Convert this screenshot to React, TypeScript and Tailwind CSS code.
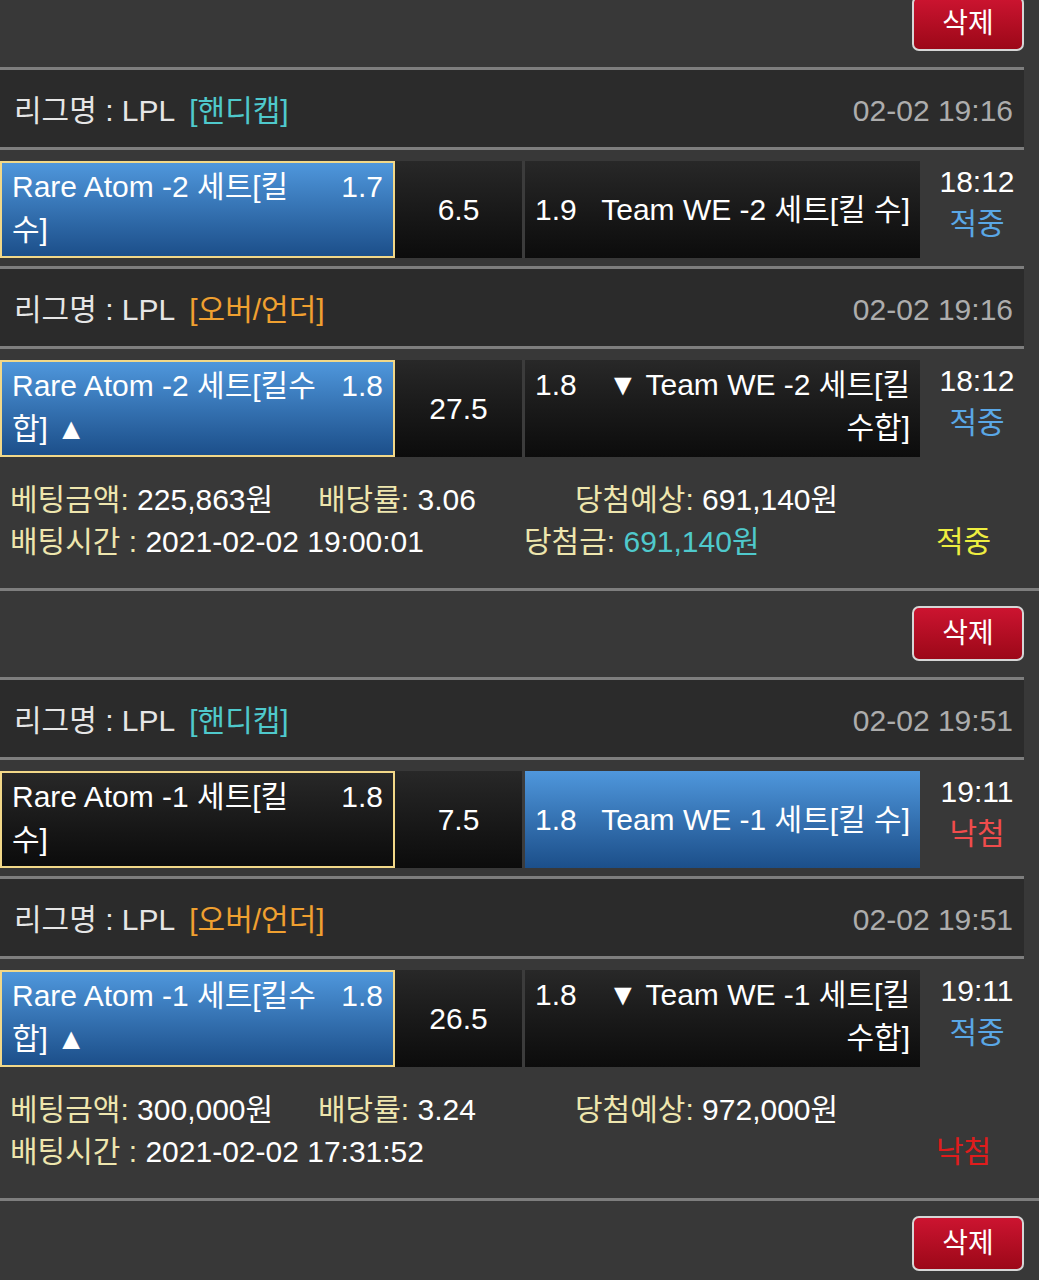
import React from "react";

type Side = { lines: string[]; odds: string; selected: boolean };
type Match = {
  type: "핸디캡" | "오버/언더";
  date: string;
  left: Side;
  mid: string;
  right: Side;
  time: string;
  result: "적중" | "낙첨";
};
type Group = {
  matches: Match[];
  amount: string;
  rate: string;
  expect: string;
  betTime: string;
  won?: string;
  status: "적중" | "낙첨";
};

const groups: Group[] = [
  {
    matches: [
      {
        type: "핸디캡",
        date: "02-02 19:16",
        left: { lines: ["Rare Atom -2 세트[킬", "수]"], odds: "1.7", selected: true },
        mid: "6.5",
        right: { lines: ["Team WE -2 세트[킬 수]"], odds: "1.9", selected: false },
        time: "18:12",
        result: "적중",
      },
      {
        type: "오버/언더",
        date: "02-02 19:16",
        left: { lines: ["Rare Atom -2 세트[킬수", "합] ▲"], odds: "1.8", selected: true },
        mid: "27.5",
        right: { lines: ["▼ Team WE -2 세트[킬", "수합]"], odds: "1.8", selected: false },
        time: "18:12",
        result: "적중",
      },
    ],
    amount: "225,863원",
    rate: "3.06",
    expect: "691,140원",
    betTime: "2021-02-02 19:00:01",
    won: "691,140원",
    status: "적중",
  },
  {
    matches: [
      {
        type: "핸디캡",
        date: "02-02 19:51",
        left: { lines: ["Rare Atom -1 세트[킬", "수]"], odds: "1.8", selected: false },
        mid: "7.5",
        right: { lines: ["Team WE -1 세트[킬 수]"], odds: "1.8", selected: true },
        time: "19:11",
        result: "낙첨",
      },
      {
        type: "오버/언더",
        date: "02-02 19:51",
        left: { lines: ["Rare Atom -1 세트[킬수", "합] ▲"], odds: "1.8", selected: true },
        mid: "26.5",
        right: { lines: ["▼ Team WE -1 세트[킬", "수합]"], odds: "1.8", selected: false },
        time: "19:11",
        result: "적중",
      },
    ],
    amount: "300,000원",
    rate: "3.24",
    expect: "972,000원",
    betTime: "2021-02-02 17:31:52",
    status: "낙첨",
  },
];

const blue = "bg-gradient-to-b from-[#4f97dc] to-[#1c4f8a]";
const dark = "bg-gradient-to-b from-[#282828] to-[#0c0c0c]";

function DeleteArea({ first }: { first?: boolean }) {
  return (
    <div
      className={`flex flex-col justify-end items-end overflow-hidden pb-[16px] pr-[15px] ${
        first ? "h-[67px]" : "h-[86px]"
      }`}
    >
      <button className="shrink-0 w-[112px] h-[55px] rounded-[7px] border-2 border-[#d6d6d6] bg-gradient-to-b from-[#cc1430] to-[#9c0818] text-white text-[28px] leading-none flex items-center justify-center">
        삭제
      </button>
    </div>
  );
}

function Line({ full }: { full?: boolean }) {
  return <div className={`h-[3px] bg-[#7e7e7e] ${full ? "w-full" : "w-[1024px]"}`} />;
}

function Header({ m }: { m: Match }) {
  return (
    <div className="w-[1024px] h-[77px] bg-[#2b2b2b] flex items-center pt-[4px] pl-[14px] pr-[11px]">
      <span className="text-[30px] text-[#e6e6e6]">리그명 : LPL</span>
      <span
        className={`ml-[14px] text-[30px] ${
          m.type === "핸디캡" ? "text-[#4fc9cc]" : "text-[#f0a030]"
        }`}
      >
        [{m.type}]
      </span>
      <span className="ml-auto text-[30px] text-[#adadad]">{m.date}</span>
    </div>
  );
}

function MatchRow({ m }: { m: Match }) {
  return (
    <div className="pt-[11px] pb-[8px]">
      <div className="w-[1024px] h-[97px] flex text-white text-[30px] leading-[43px]">
        <div
          className={`w-[395px] h-full border-2 border-[#f2d888] flex items-center pl-[10px] pr-[10px] pb-[4px] ${
            m.left.selected ? blue : dark
          }`}
        >
          <div className="flex w-full items-start">
            <div className="flex-1 whitespace-nowrap">
              {m.left.lines.map((l, i) => (
                <div key={i}>{l}</div>
              ))}
            </div>
            <div>{m.left.odds}</div>
          </div>
        </div>
        <div className={`w-[127px] h-full flex items-center justify-center ${dark}`}>
          {m.mid}
        </div>
        <div className="w-[3px] h-full bg-[#3c3c3c]" />
        <div
          className={`w-[395px] h-full flex items-center pl-[10px] pr-[10px] ${
            m.right.lines.length > 1 ? "pb-[6px]" : ""
          } ${m.right.selected ? blue : dark}`}
        >
          <div className="flex w-full items-start">
            <div className="w-[60px]">{m.right.odds}</div>
            <div className="flex-1 text-right whitespace-nowrap">
              {m.right.lines.map((l, i) => (
                <div key={i}>{l}</div>
              ))}
            </div>
          </div>
        </div>
        <div className="w-[104px] h-full flex flex-col items-center pl-[10px]">
          <div className="leading-[42px]">{m.time}</div>
          <div
            className={`leading-[42px] ${
              m.result === "적중" ? "text-[#5aa7e6]" : "text-[#f04c4c]"
            }`}
          >
            {m.result}
          </div>
        </div>
      </div>
    </div>
  );
}

function Summary({ g }: { g: Group }) {
  const label = "text-[#eee6ae]";
  return (
    <div className="h-[123px] pt-[14px] pl-[10px] text-[30px] leading-[42px] text-white whitespace-nowrap">
      <div className="flex">
        <span className="w-[308px]">
          <span className={label}>베팅금액:</span> {g.amount}
        </span>
        <span className="w-[257px]">
          <span className={label}>배당률:</span> {g.rate}
        </span>
        <span>
          <span className={label}>당첨예상:</span> {g.expect}
        </span>
      </div>
      <div className="flex">
        <span className="w-[514px]">
          <span className={label}>배팅시간 :</span> {g.betTime}
        </span>
        <span className="w-[412px]">
          {g.won && (
            <>
              <span className={label}>당첨금:</span>{" "}
              <span className="text-[#4fc9cc]">{g.won}</span>
            </>
          )}
        </span>
        <span className={g.status === "적중" ? "text-[#eeee40]" : "text-[#e01c1c]"}>
          {g.status}
        </span>
      </div>
    </div>
  );
}

export default function App() {
  return (
    <div className="min-h-[1280px] w-full bg-[#383838] font-['Liberation_Sans','Noto_Sans_CJK_KR',sans-serif] overflow-hidden">
      <DeleteArea first />
      {groups.map((g, gi) => (
        <div key={gi}>
          {g.matches.map((m, mi) => (
            <div key={mi}>
              <Line />
              <Header m={m} />
              <Line />
              <MatchRow m={m} />
            </div>
          ))}
          <Summary g={g} />
          <Line full />
          <DeleteArea />
        </div>
      ))}
    </div>
  );
}
